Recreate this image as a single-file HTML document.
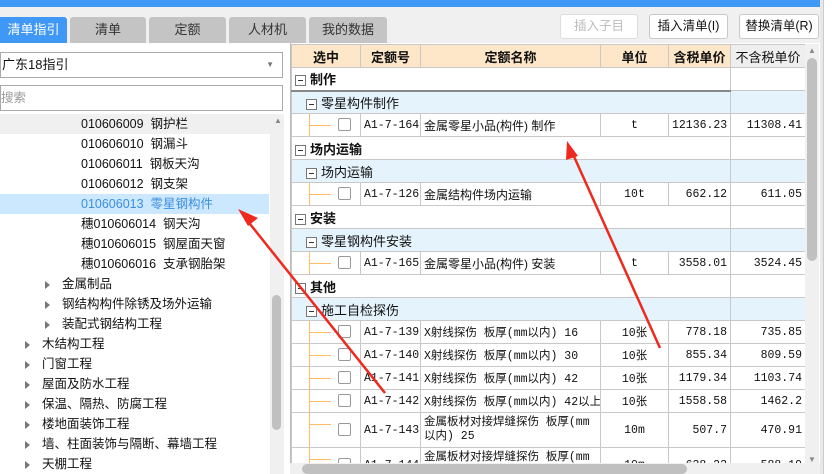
<!DOCTYPE html>
<html><head><meta charset="utf-8"><style>
*{margin:0;padding:0;box-sizing:border-box}
html,body{width:832px;height:474px;overflow:hidden}
body{background:#f0f0f0;font-family:"Liberation Sans","Noto Sans CJK SC",sans-serif;font-size:13px;color:#111;position:relative}
.a{position:absolute}
.tab{position:absolute;top:17px;height:26px;background:#c4c4c4;border-radius:3px 3px 0 0;text-align:center;line-height:26px;font-size:13px;color:#333}
.btn{position:absolute;top:14px;height:25px;border:1px solid #c8c8c8;border-radius:3px;background:#fff;text-align:center;line-height:23px;font-size:12.5px}
table{border-collapse:collapse;table-layout:fixed;position:absolute;left:291px;top:44px;width:514px;background:#fff}
td{border:1px solid #c8c8c8;height:23px;padding:0 3px;white-space:nowrap;overflow:hidden;font-family:"Liberation Mono","Noto Sans CJK SC",monospace;font-size:11.5px}
th{background:#fde7c8;border:1px solid #c8c8c8;height:23px;font-weight:bold;font-size:13px}
.r{text-align:right}.c{text-align:center}
.cat td{font-family:"Liberation Sans","Noto Sans CJK SC",sans-serif;font-weight:bold;font-size:13px;position:relative}
.sub td{background:#e5f3fd;font-family:"Liberation Sans","Noto Sans CJK SC",sans-serif;font-size:13px;position:relative}
.bx{display:inline-block;width:11px;height:11px;border:1px solid #777;vertical-align:middle;margin-right:4px;position:relative;background:#fff}
.bx:after{content:"";position:absolute;left:2px;top:4px;width:5px;height:1px;background:#333}
.cb{display:inline-block;width:13px;height:13px;border:1px solid #999;border-radius:2px;vertical-align:middle;margin-left:43px}
.ln{position:relative}
.ln:before{content:"";position:absolute;left:17px;top:0;width:1px;height:100%;background:#fb6}
.ln:after{content:"";position:absolute;left:17px;top:11px;width:22px;height:1px;background:#fb6}
.tree div{height:20px;line-height:20px;white-space:nowrap;font-size:12.5px}
.tri{display:inline-block;width:0;height:0;border-left:5px solid #777;border-top:4px solid transparent;border-bottom:4px solid transparent;margin-right:12px;vertical-align:middle}
</style></head><body>
<div class="a" style="left:0;top:0;width:832px;height:7px;background:#3f97f6"></div>
<div class="tab" style="left:0;width:67px;background:#3f97f6;color:#fff;border-radius:0 3px 0 0">清单指引</div>
<div class="tab" style="left:70px;width:76px">清单</div>
<div class="tab" style="left:149px;width:77px">定额</div>
<div class="tab" style="left:229px;width:77px">人材机</div>
<div class="tab" style="left:309px;width:78px">我的数据</div>
<div class="btn" style="left:560px;width:78px;color:#bbb;border-color:#ddd">插入子目</div>
<div class="btn" style="left:649px;width:79px">插入清单(I)</div>
<div class="btn" style="left:739px;width:80px">替换清单(R)</div>
<div class="a" style="left:0;top:43px;width:290px;height:431px;background:#fff"></div>
<div class="a" style="left:0;top:52px;width:283px;height:26px;border:1px solid #aaa;background:#fff;line-height:24px;padding-left:1px;font-size:13px">广东18指引<span style="position:absolute;right:8px;top:0;color:#777;font-size:8px">▼</span></div>
<div class="a" style="left:0;top:85px;width:283px;height:26px;border:1px solid #aaa;background:#fff;line-height:24px;color:#999;font-size:12.5px">搜索</div>
<div class="a" style="left:0;top:114px;width:270px;height:360px;background:#fff"></div>
<div class="a" style="left:0;top:114px;width:270px;height:20px;background:#f0f0f0"></div>
<div class="a" style="left:270px;top:114px;width:14px;height:360px;background:#f0f0f0"></div>
<div class="a" style="left:274px;top:116px;color:#888;font-size:8px">▲</div>
<div class="a" style="left:272px;top:295px;width:9px;height:135px;background:#c0c0c0;border-radius:5px"></div>
<div class="a" style="left:0;top:194px;width:269px;height:20px;background:#cce8ff"></div>
<div class="a tree" style="left:0;top:114px;width:270px">
<div style="padding-left:81px">010606009&nbsp; 钢护栏</div>
<div style="padding-left:81px">010606010&nbsp; 钢漏斗</div>
<div style="padding-left:81px">010606011&nbsp; 钢板天沟</div>
<div style="padding-left:81px">010606012&nbsp; 钢支架</div>
<div style="padding-left:81px;color:#3a8de0">010606013&nbsp; 零星钢构件</div>
<div style="padding-left:81px">穗010606014&nbsp; 钢天沟</div>
<div style="padding-left:81px">穗010606015&nbsp; 钢屋面天窗</div>
<div style="padding-left:81px">穗010606016&nbsp; 支承钢胎架</div>
<div style="padding-left:45px"><span class="tri"></span>金属制品</div>
<div style="padding-left:45px"><span class="tri"></span>钢结构构件除锈及场外运输</div>
<div style="padding-left:45px"><span class="tri"></span>装配式钢结构工程</div>
<div style="padding-left:25px"><span class="tri"></span>木结构工程</div>
<div style="padding-left:25px"><span class="tri"></span>门窗工程</div>
<div style="padding-left:25px"><span class="tri"></span>屋面及防水工程</div>
<div style="padding-left:25px"><span class="tri"></span>保温、隔热、防腐工程</div>
<div style="padding-left:25px"><span class="tri"></span>楼地面装饰工程</div>
<div style="padding-left:25px"><span class="tri"></span>墙、柱面装饰与隔断、幕墙工程</div>
<div style="padding-left:25px"><span class="tri"></span>天棚工程</div>
</div>
<div class="a" style="left:290px;top:43px;width:530px;height:431px;background:#fff;border-left:1px solid #bbb;overflow:hidden">
<table style="left:0;top:1px">
<colgroup><col style="width:69px"><col style="width:60px"><col style="width:180px"><col style="width:68px"><col style="width:62px"><col style="width:75px"></colgroup>
<tr><th>选中</th><th>定额号</th><th>定额名称</th><th>单位</th><th>含税单价</th><th style="background:#eee;font-weight:normal">不含税单价</th></tr>
<tr class="cat"><td colspan="5" style="border-bottom:2px solid #888"><span class="bx"></span>制作</td><td></td></tr>
<tr class="sub"><td colspan="5" style="padding-left:14px"><span class="bx"></span>零星构件制作</td><td></td></tr>
<tr><td class="ln"><span class="cb"></span></td><td>A1-7-164</td><td style="font-family:'Liberation Sans','Noto Sans CJK SC',sans-serif;font-size:12px">金属零星小品(构件) 制作</td><td class="c">t</td><td class="r">12136.23</td><td class="r">11308.41</td></tr>
<tr class="cat"><td colspan="5"><span class="bx"></span>场内运输</td><td></td></tr>
<tr class="sub"><td colspan="5" style="padding-left:14px"><span class="bx"></span>场内运输</td><td></td></tr>
<tr><td class="ln"><span class="cb"></span></td><td>A1-7-126</td><td style="font-family:'Liberation Sans','Noto Sans CJK SC',sans-serif;font-size:12px">金属结构件场内运输</td><td class="c">10t</td><td class="r">662.12</td><td class="r">611.05</td></tr>
<tr class="cat"><td colspan="5"><span class="bx"></span>安装</td><td></td></tr>
<tr class="sub"><td colspan="5" style="padding-left:14px"><span class="bx"></span>零星钢构件安装</td><td></td></tr>
<tr><td class="ln"><span class="cb"></span></td><td>A1-7-165</td><td style="font-family:'Liberation Sans','Noto Sans CJK SC',sans-serif;font-size:12px">金属零星小品(构件) 安装</td><td class="c">t</td><td class="r">3558.01</td><td class="r">3524.45</td></tr>
<tr class="cat"><td colspan="5"><span class="bx"></span>其他</td><td></td></tr>
<tr class="sub"><td colspan="5" style="padding-left:14px"><span class="bx"></span>施工自检探伤</td><td></td></tr>
<tr><td class="ln"><span class="cb"></span></td><td>A1-7-139</td><td>X射线探伤 板厚(mm以内) 16</td><td class="c">10张</td><td class="r">778.18</td><td class="r">735.85</td></tr>
<tr><td class="ln"><span class="cb"></span></td><td>A1-7-140</td><td>X射线探伤 板厚(mm以内) 30</td><td class="c">10张</td><td class="r">855.34</td><td class="r">809.59</td></tr>
<tr><td class="ln"><span class="cb"></span></td><td>A1-7-141</td><td>X射线探伤 板厚(mm以内) 42</td><td class="c">10张</td><td class="r">1179.34</td><td class="r">1103.74</td></tr>
<tr><td class="ln"><span class="cb"></span></td><td>A1-7-142</td><td>X射线探伤 板厚(mm以内) 42以上</td><td class="c">10张</td><td class="r">1558.58</td><td class="r">1462.2</td></tr>
<tr style="height:35px"><td class="ln" style="height:35px"><span class="cb"></span></td><td>A1-7-143</td><td style="white-space:normal;line-height:14px">金属板材对接焊缝探伤 板厚(mm以内) 25</td><td class="c">10m</td><td class="r">507.7</td><td class="r">470.91</td></tr>
<tr style="height:35px"><td class="ln" style="height:35px"><span class="cb"></span></td><td>A1-7-144</td><td style="white-space:normal;line-height:14px">金属板材对接焊缝探伤 板厚(mm以内) 40</td><td class="c">10m</td><td class="r">638.23</td><td class="r">588.19</td></tr>
</table>
</div>
<div class="a" style="left:805px;top:44px;width:14px;height:419px;background:#f0f0f0"></div>
<div class="a" style="left:808px;top:46px;color:#888;font-size:8px">▲</div>
<div class="a" style="left:807px;top:58px;width:10px;height:203px;background:#c0c0c0;border-radius:5px"></div>
<div class="a" style="left:808px;top:455px;color:#888;font-size:8px">▼</div>
<div class="a" style="left:290px;top:463px;width:530px;height:11px;background:#f0f0f0"></div>
<div class="a" style="left:302px;top:464px;width:385px;height:10px;background:#c0c0c0;border-radius:5px"></div>
<div class="a" style="left:820px;top:0;width:12px;height:474px;background:#e8e8e8"></div>
<div class="a" style="left:823px;top:0;width:9px;height:474px;background:#fff;border-left:1px solid #ccc"></div>
<svg class="a" style="left:0;top:0" width="832" height="474">
<line x1="385" y1="393" x2="246" y2="219" stroke="#ee2a1e" stroke-width="2.5"/>
<polygon points="238,209 258,218 248,226" fill="#ee2a1e"/>
<line x1="660" y1="348" x2="572" y2="152" stroke="#ee2a1e" stroke-width="2.5"/>
<polygon points="567,141 578,156 566,160" fill="#ee2a1e"/>
</svg>
</body></html>
